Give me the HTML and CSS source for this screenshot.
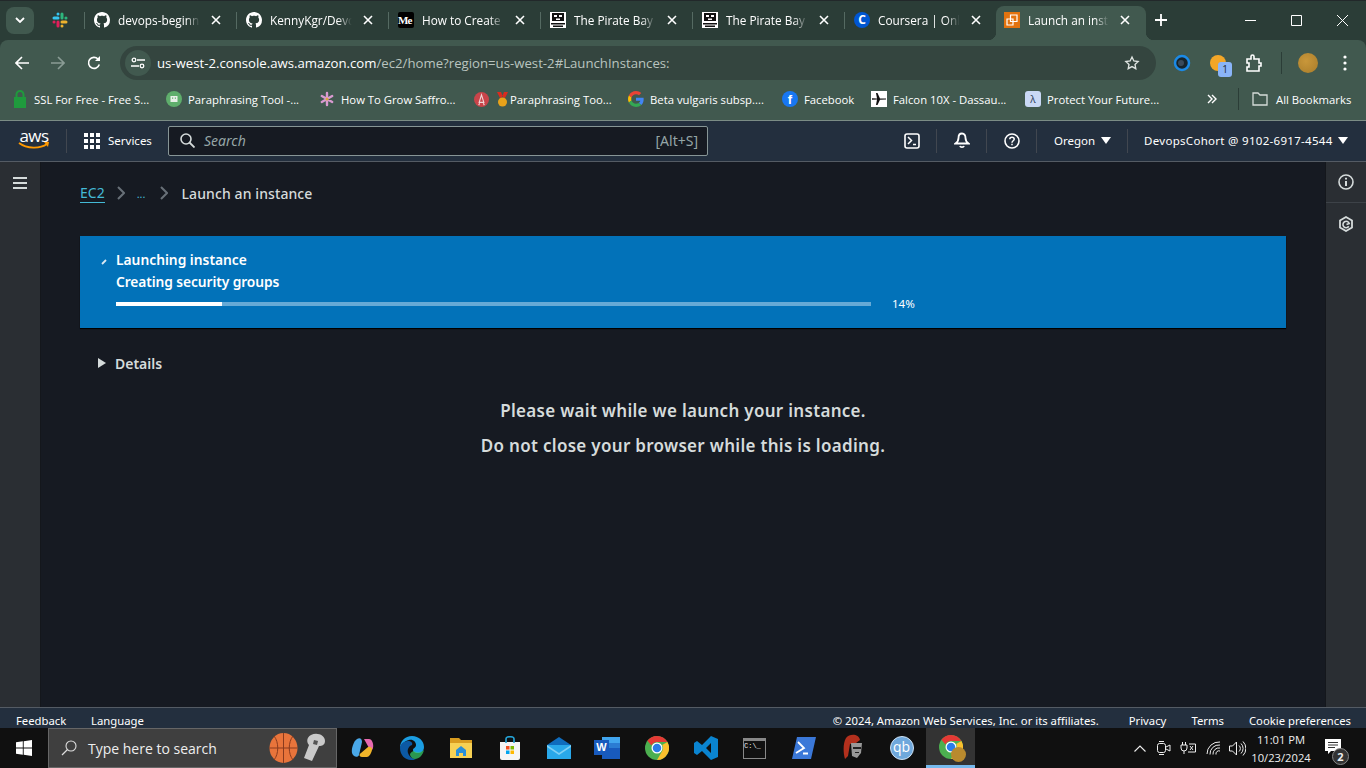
FILE: index.html
```html
<!DOCTYPE html>
<html lang="en">
<head>
    <meta charset="UTF-8">
    <meta name="viewport" content="width=device-width, initial-scale=1.0">
    <title>Launch an instance</title>
    <link rel="stylesheet" href="styles.css">
</head>
<body>
    <svg class="defs" width="0" height="0">
        <symbol id="github" viewBox="0 0 16 16"><path fill="#fff" d="M8 0C3.58 0 0 3.58 0 8c0 3.54 2.29 6.53 5.47 7.59.4.07.55-.27.55-.38 0-.19-.01-.82-.01-1.49-2.01.37-2.53-.49-2.69-.94-.09-.23-.48-.94-.82-1.13-.28-.15-.68-.52-.01-.53.63-.01 1.08.58 1.23.82.72 1.21 1.87.87 2.33.66.07-.52.28-.87.51-1.07-1.78-.2-3.64-.89-3.64-3.95 0-.87.31-1.59.82-2.15-.08-.2-.36-1.02.08-2.12 0 0 .67-.21 2.2.82.64-.18 1.32-.27 2-.27s1.36.09 2 .27c1.53-1.04 2.2-.82 2.2-.82.44 1.1.16 1.92.08 2.12.51.56.82 1.27.82 2.15 0 3.07-1.87 3.75-3.65 3.95.29.25.54.73.54 1.48 0 1.07-.01 1.93-.01 2.2 0 .21.15.46.55.38A8.013 8.013 0 0016 8c0-4.42-3.58-8-8-8z"/></symbol>
        <symbol id="pirate" viewBox="0 0 16 16"><path fill="#fff" d="M0 0h16v16H0z"/><path fill="#111" d="M2 1h12v8H2zM1 11h14v1.500H1zM3 13.500h10V15H3z"/><path fill="#fff" d="M4 3h3v2H4zM9 3h3v2H9zM6 6.500h4V8H6z"/></symbol>
        <symbol id="close" viewBox="0 0 10 10"><path stroke="#fff" stroke-width="1.600" d="M1 1l8 8M9 1l-8 8"/></symbol>
        <symbol id="chrome-mark" viewBox="0 0 48 48">
            <circle cx="24" cy="24" r="24" fill="#4caf50"/>
            <path fill="#e53935" d="M24 0a24 24 0 0 1 20.800 12H24a12 12 0 0 0-11 7.200L4.800 9.600A24 24 0 0 1 24 0z"/>
            <path fill="#fbc02d" d="M44.800 12A24 24 0 0 1 24 48l10.400-18A12 12 0 0 0 34.400 18z"/>
            <circle cx="24" cy="24" r="11" fill="#fff"/>
            <circle cx="24" cy="24" r="8.500" fill="#2b7de9"/>
        </symbol>
    </svg>

    <div class="tabstrip">
        <div class="tab-list-btn"><svg width="10" height="6" viewBox="0 0 10 6"><path fill="none" stroke="#fff" stroke-width="1.800" d="M1 1l4 4 4-4"/></svg></div>
        <div class="pinned">
            <svg width="16" height="16" viewBox="0 0 16 16">
                <path stroke="#36c5f0" stroke-width="3" stroke-linecap="round" d="M2 6h4M6 2v.1"/>
                <path stroke="#2eb67d" stroke-width="3" stroke-linecap="round" d="M10 2v4M14 6h-.1"/>
                <path stroke="#ecb22e" stroke-width="3" stroke-linecap="round" d="M10 10h4M10 14v-.1"/>
                <path stroke="#e01e5a" stroke-width="3" stroke-linecap="round" d="M6 14v-4M2 10h.1"/>
            </svg>
        </div>
        <div class="tab">
            <svg class="favicon" width="16" height="16"><use href="#github"/></svg>
            <span class="tab-title">devops-beginn</span>
            <svg class="tab-close" width="10" height="10"><use href="#close"/></svg>
        </div>
        <div class="tab">
            <svg class="favicon" width="16" height="16"><use href="#github"/></svg>
            <span class="tab-title">KennyKgr/Devo</span>
            <svg class="tab-close" width="10" height="10"><use href="#close"/></svg>
        </div>
        <div class="tab">
            <span class="favicon medium">Me</span>
            <span class="tab-title">How to Create</span>
            <svg class="tab-close" width="10" height="10"><use href="#close"/></svg>
        </div>
        <div class="tab">
            <svg class="favicon" width="16" height="16"><use href="#pirate"/></svg>
            <span class="tab-title">The Pirate Bay</span>
            <svg class="tab-close" width="10" height="10"><use href="#close"/></svg>
        </div>
        <div class="tab">
            <svg class="favicon" width="16" height="16"><use href="#pirate"/></svg>
            <span class="tab-title">The Pirate Bay</span>
            <svg class="tab-close" width="10" height="10"><use href="#close"/></svg>
        </div>
        <div class="tab">
            <span class="favicon coursera">C</span>
            <span class="tab-title">Coursera | Onli</span>
            <svg class="tab-close" width="10" height="10"><use href="#close"/></svg>
        </div>
        <div class="tab tab-active">
            <svg class="favicon" width="16" height="16" viewBox="0 0 16 16">
                <path fill="#e2730f" d="M0 0h16v16H0z"/>
                <path fill="none" stroke="#fff" stroke-width="1.200" d="M6.500 3h6.500v6.500H6.500zM3 7h6v6H3z"/>
            </svg>
            <span class="tab-title">Launch an insta</span>
            <svg class="tab-close" width="10" height="10"><use href="#close"/></svg>
        </div>
        <svg class="new-tab" width="12" height="12" viewBox="0 0 12 12"><path stroke="#fff" stroke-width="1.800" d="M6 0v12M0 6h12"/></svg>
        <div class="window-btns">
            <svg width="11" height="11" viewBox="0 0 11 11"><path stroke="#fff" d="M0 5.500h11"/></svg>
            <svg width="11" height="11" viewBox="0 0 11 11"><path fill="none" stroke="#fff" d="M.5.500h10v10H.5z"/></svg>
            <svg width="11" height="11" viewBox="0 0 11 11"><path stroke="#fff" d="M0 0l11 11M11 0L0 11"/></svg>
        </div>
    </div>

    <div class="toolbar">
        <svg class="tool-icon" width="14" height="14" viewBox="0 0 14 14"><path fill="none" stroke="#fff" stroke-width="1.600" d="M14 7H1.500M7 1L1 7l6 6"/></svg>
        <svg class="tool-icon" width="14" height="14" viewBox="0 0 14 14"><path fill="none" stroke="#8a9c95" stroke-width="1.600" d="M0 7h12.500M7 1l6 6-6 6"/></svg>
        <svg class="tool-icon" width="14" height="14" viewBox="0 0 14 14"><path fill="none" stroke="#fff" stroke-width="1.600" d="M12.300 8.500A5.500 5.500 0 1 1 11 3"/><path fill="#fff" d="M13 0v5H8z"/></svg>
        <div class="omnibox">
            <div class="site-info">
                <svg width="14" height="12" viewBox="0 0 14 12"><g fill="none" stroke="#fff" stroke-width="1.300"><circle cx="3" cy="3" r="1.800"/><path d="M6 3h8M0 9h8"/><circle cx="11" cy="9" r="1.800"/></g></svg>
            </div>
            <span class="url"><b>us-west-2.console.aws.amazon.com</b>/ec2/home?region=us-west-2#LaunchInstances:</span>
            <svg width="16" height="16" viewBox="0 0 24 24"><path fill="none" stroke="#dfe5e2" stroke-width="2" d="M12 3l2.800 5.900 6.400.8-4.700 4.400 1.200 6.400-5.700-3.100-5.700 3.100 1.200-6.400L2.800 9.700l6.400-.8z"/></svg>
        </div>
        <div class="extensions">
            <svg width="18" height="18" viewBox="0 0 18 18"><circle cx="9" cy="9" r="7" fill="#16242c" stroke="#1b8ae6" stroke-width="2.500"/><circle cx="8" cy="9" r="3" fill="#3a4a5a"/></svg>
            <div class="ext-orange"><span class="ext-badge">1</span></div>
            <svg width="16" height="18" viewBox="0 0 16 18"><path fill="none" stroke="#fff" stroke-width="1.600" d="M1 5h4V2.500a1.500 1.500 0 0 1 3 0V5h5v4h2v3h-2v5H1v-4h2v-4H1z"/></svg>
            <span class="ext-sep"></span>
            <div class="avatar"></div>
            <svg width="4" height="16" viewBox="0 0 4 16"><g fill="#fff"><circle cx="2" cy="2" r="1.600"/><circle cx="2" cy="8" r="1.600"/><circle cx="2" cy="14" r="1.600"/></g></svg>
        </div>
    </div>

    <div class="bookmarks">
        <div class="bookmark bm-ssl">
            <svg width="14" height="18" viewBox="0 0 14 18"><path fill="#1f9a3d" d="M1 7h12v11H1z"/><path fill="none" stroke="#1f9a3d" stroke-width="2" d="M3.500 7V4.500a3.500 3.500 0 0 1 7 0V7"/></svg>
            <span>SSL For Free - Free S...</span>
        </div>
        <div class="bookmark bm-para">
            <svg width="16" height="16" viewBox="0 0 16 16"><circle cx="8" cy="8" r="8" fill="#5fae6c"/><path fill="#e8efe8" d="M4.500 5h7v6h-7z"/><path fill="#5fae6c" d="M6 6.500h1.200v1.200H6zM8.800 6.500H10v1.200H8.800z"/></svg>
            <span>Paraphrasing Tool -...</span>
        </div>
        <div class="bookmark bm-saffron">
            <svg width="16" height="16" viewBox="0 0 16 16"><g stroke="#d99ad0" stroke-width="2.400" stroke-linecap="round"><path d="M8 2v12M2.800 5l10.400 6M13.200 5L2.800 11"/></g><circle cx="8" cy="8" r="1.500" fill="#d9a53a"/></svg>
            <span>How To Grow Saffro...</span>
        </div>
        <div class="bookmark bm-medal">
            <svg width="15" height="15" viewBox="0 0 16 16"><circle cx="8" cy="8" r="8" fill="#c9444a"/><path fill="none" stroke="#f0d6d6" stroke-width="1.200" d="M8 3l2.500 8h-5zM6 12l-1 2M10 12l1 2"/></svg>
            <svg class="medal" width="13" height="15" viewBox="0 0 13 15"><path fill="#d92b1f" d="M1 0h4l2 5-3 1zM12 0H8L6 5l3 1z"/><circle cx="6.500" cy="10" r="4.500" fill="#e8a21a"/></svg>
            <span>Paraphrasing Too...</span>
        </div>
        <div class="bookmark bm-google">
            <svg width="16" height="16" viewBox="0 0 48 48"><path fill="#EA4335" d="M24 9.500c3.500 0 6.700 1.300 9.100 3.500l6.800-6.800C35.800 2.400 30.200 0 24 0 14.600 0 6.500 5.400 2.600 13.200l7.900 6.100C12.400 13.700 17.700 9.500 24 9.500z"/><path fill="#4285F4" d="M47 24.500c0-1.600-.2-3.100-.4-4.500H24v9h13c-.6 3-2.300 5.500-4.800 7.200l7.700 6C44.400 38 47 31.800 47 24.500z"/><path fill="#FBBC05" d="M10.500 28.700c-.5-1.400-.8-3-.8-4.700s.3-3.200.8-4.700l-7.900-6.100C.9 16.500 0 20.100 0 24s.9 7.500 2.600 10.800z"/><path fill="#34A853" d="M24 48c6.500 0 11.900-2.100 15.900-5.800l-7.700-6c-2.200 1.500-4.900 2.300-8.200 2.300-6.300 0-11.600-4.200-13.500-9.900l-7.900 6.100C6.500 42.600 14.600 48 24 48z"/></svg>
            <span>Beta vulgaris subsp....</span>
        </div>
        <div class="bookmark bm-facebook">
            <span class="fb-icon">f</span>
            <span>Facebook</span>
        </div>
        <div class="bookmark bm-falcon">
            <svg width="16" height="16" viewBox="0 0 16 16"><path fill="#fff" d="M0 0h16v16H0z"/><path fill="#111" d="M1 7.200l5 .2L5 2h1.500L9 7.400l6 .2v1L9 8.800 6.500 14H5l1-5.400-5 .2z"/></svg>
            <span>Falcon 10X - Dassau...</span>
        </div>
        <div class="bookmark bm-protect">
            <span class="protect-icon">λ</span>
            <span>Protect Your Future...</span>
        </div>
        <svg class="bm-more" width="10" height="10" viewBox="0 0 10 10"><path fill="none" stroke="#fff" stroke-width="1.400" d="M1 1l4 4-4 4M5 1l4 4-4 4"/></svg>
        <span class="bm-sep"></span>
        <div class="bookmark bm-all">
            <svg width="16" height="14" viewBox="0 0 16 14"><path fill="none" stroke="#d5dcd9" stroke-width="1.300" d="M1 1h5l2 2h7v10H1z"/></svg>
            <span>All Bookmarks</span>
        </div>
    </div>

    <header class="aws-nav">
        <div class="aws-logo">
            <span class="aws-word">aws</span>
            <svg width="32" height="8" viewBox="0 0 32 8"><path fill="none" stroke="#f90" stroke-width="1.800" d="M1 1c8 6 21 6 28 1"/><path fill="#f90" d="M26 0l5 0-1 5z"/></svg>
        </div>
        <span class="nav-sep-logo"></span>
        <svg class="grid-icon" width="16" height="16" viewBox="0 0 16 16"><g fill="#fff"><path d="M0 0h4v4H0zM6 0h4v4H6zM12 0h4v4h-4zM0 6h4v4H0zM6 6h4v4H6zM12 6h4v4h-4zM0 12h4v4H0zM6 12h4v4H6zM12 12h4v4h-4z"/></g></svg>
        <span class="nav-services">Services</span>
        <div class="nav-search">
            <svg width="15" height="15" viewBox="0 0 15 15"><circle cx="6" cy="6" r="5" fill="none" stroke="#d5dbdb" stroke-width="1.600"/><path stroke="#d5dbdb" stroke-width="1.800" d="M9.500 9.500l5 5"/></svg>
            <span class="search-word">Search</span>
            <span class="search-key">[Alt+S]</span>
        </div>
        <div class="nav-right">
            <div class="nav-btn nav-icon-btn">
                <svg width="16" height="16" viewBox="0 0 16 16"><rect x="1" y="1" width="14" height="14" rx="2" fill="none" stroke="#fff" stroke-width="1.600"/><path fill="none" stroke="#fff" stroke-width="1.500" d="M4 4l3.500 3.500L4 11M9 11.500h3"/></svg>
            </div>
            <div class="nav-btn nav-icon-btn">
                <svg width="16" height="17" viewBox="0 0 16 17"><path fill="none" stroke="#fff" stroke-width="1.800" d="M8 1.500c-2.500 0-3.500 2-3.500 4.500 0 2.500-1 4-3 5.500h13c-2-1.500-3-3-3-5.500 0-2.500-1-4.500-3.500-4.500zM6 14c.5 1.500 3.500 1.500 4 0"/></svg>
            </div>
            <div class="nav-btn nav-icon-btn">
                <svg width="16" height="16" viewBox="0 0 16 16"><circle cx="8" cy="8" r="7" fill="none" stroke="#fff" stroke-width="1.600"/><path fill="none" stroke="#fff" stroke-width="1.500" d="M5.800 6.200C5.800 3.700 10.200 3.700 10.200 6.200 10.200 7.800 8 7.800 8 9.700"/><path stroke="#fff" stroke-width="1.500" d="M8 10.800v1.500"/></svg>
            </div>
            <div class="nav-btn nav-region"><span>Oregon</span><i class="caret"></i></div>
            <div class="nav-btn nav-account"><span>DevopsCohort @ 9102-6917-4544</span><i class="caret"></i></div>
        </div>
    </header>

    <div class="console">
        <aside class="side-left">
            <svg width="14" height="12" viewBox="0 0 14 12"><path stroke="#d5dbdb" stroke-width="2" d="M0 1h14M0 6h14M0 11h14"/></svg>
        </aside>

        <main class="content">
            <nav class="crumbs">
                <a class="crumb-link">EC2</a>
                <svg class="crumb-arrow" width="8" height="14" viewBox="0 0 8 14"><path fill="none" stroke="#687078" stroke-width="2" d="M1 1l6 6-6 6"/></svg>
                <span class="crumb-dots">...</span>
                <svg class="crumb-arrow" width="8" height="14" viewBox="0 0 8 14"><path fill="none" stroke="#687078" stroke-width="2" d="M1 1l6 6-6 6"/></svg>
                <span class="crumb-current">Launch an instance</span>
            </nav>

            <section class="flash">
                <svg class="flash-spin" width="6" height="6" viewBox="0 0 6 6"><path stroke="#dbe9f3" stroke-width="1.800" d="M1 5l4-4"/></svg>
                <div class="flash-body">
                    <div class="flash-title">Launching instance</div>
                    <div class="flash-step">Creating security groups</div>
                    <div class="progress-row">
                        <div class="progress-track"><div class="progress-fill" style="width: 14%"></div></div>
                        <span class="progress-pct">14%</span>
                    </div>
                </div>
            </section>

            <div class="details">
                <i class="details-arrow"></i>
                <span>Details</span>
            </div>

            <div class="wait-msg">
                <p>Please wait while we launch your instance.</p>
                <p>Do not close your browser while this is loading.</p>
            </div>
        </main>

        <aside class="side-right">
            <div class="side-btn">
                <svg width="16" height="16" viewBox="0 0 16 16"><circle cx="8" cy="8" r="7" fill="none" stroke="#d5dbdb" stroke-width="1.600"/><path stroke="#d5dbdb" stroke-width="2" d="M8 7v5M8 3.700v1.800"/></svg>
            </div>
            <div class="side-btn">
                <svg width="14" height="16" viewBox="0 0 14 16"><path fill="none" stroke="#d5dbdb" stroke-width="1.800" d="M7 1l6 3.500v7L7 15l-6-3.500v-7z"/><path fill="none" stroke="#d5dbdb" stroke-width="1.600" d="M9.800 10.300A3.200 3.200 0 1 1 10.200 7.500L7.500 8.500"/></svg>
            </div>
        </aside>
    </div>

    <footer class="aws-footer">
        <span class="foot-feedback">Feedback</span>
        <span class="foot-language">Language</span>
        <span class="foot-copy">© 2024, Amazon Web Services, Inc. or its affiliates.</span>
        <span class="foot-privacy">Privacy</span>
        <span class="foot-terms">Terms</span>
        <span>Cookie preferences</span>
    </footer>

    <div class="taskbar">
        <div class="start">
            <svg width="16" height="16" viewBox="0 0 16 16"><path fill="#fff" d="M0 2.300l6.800-1v6.200H0zM7.700 1.200L16 0v7.500H7.700zM0 8.500h6.800v6.200l-6.800-1zM7.700 8.500H16V16l-8.300-1.200z"/></svg>
        </div>
        <div class="win-search">
            <svg width="16" height="16" viewBox="0 0 16 16"><circle cx="10" cy="6" r="5" fill="none" stroke="#ddd" stroke-width="1.100"/><path stroke="#ddd" stroke-width="1.300" d="M6.500 9.500L1 15"/></svg>
            <span class="win-search-text">Type here to search</span>
            <svg class="ball" width="29" height="30" viewBox="0 0 29 30"><ellipse cx="14.500" cy="15" rx="14" ry="15" fill="#e8743b"/><path fill="none" stroke="#8a3b1e" stroke-width="1" d="M14.500 0v30M.5 15h28M5 3c5 6 5 18 0 24M24 3c-5 6-5 18 0 24"/></svg>
            <svg width="26" height="30" viewBox="0 0 26 30"><path fill="#c9c9c9" d="M10 2c6-3 14 0 14 6 0 4-3 5-6 5l-7 15-8-3 5-13C5 9 6 4 10 2z"/><path fill="#555" d="M13 7l4 1-1 4-4-1z"/></svg>
        </div>
        <div class="task-apps">
            <div class="task-app">
                <svg width="24" height="24" viewBox="0 0 24 24"><path fill="#4aa8e8" d="M6 3c3-2 5 0 5 3l-3 13c-1 3-6 2-7-2-1-5 2-12 5-14z"/><path fill="#e86ab0" d="M13 3h5c3 0 5 5 4 9-.5 3-3 2-4 0z"/><path fill="#f0b429" d="M16 21h-5c-3 0-3-3-1-4l7-6c2-1 5 1 4 3-1 4-3 7-5 7z"/></svg>
            </div>
            <div class="task-app">
                <svg width="24" height="24" viewBox="0 0 24 24"><path fill="#1b9de2" d="M12 0c7 0 12 5 12 11 0 4-3 6-6 6-4 0-5-2-5-3 0-2 3-2 3-5 0-3-3-6-7-5C4 5 1 9 0 12 0 5 5 0 12 0z"/><path fill="#0c59a4" d="M0 12c0-4 4-7 8-7 3 0 5 2 4 4-3 1-5 4-4 8 1 3 4 6 8 6-2 1-3 1-5 1C5 24 0 19 0 12z"/><path fill="#38d16c" d="M14 15c2 2 7 2 10-1-1 5-5 9-9 9-3 0-5-3-5-5 1-2 3-3 4-3z" opacity=".7"/></svg>
            </div>
            <div class="task-app">
                <svg width="22" height="20" viewBox="0 0 22 20"><path fill="#d99c1f" d="M0 0h9l2 2h11v18H0z"/><path fill="#f7d154" d="M0 5h22v15H0z"/><path fill="#2a8fd8" d="M6 12l5-4 5 4v6h-3v-3H9v3H6z"/></svg>
            </div>
            <div class="task-app">
                <svg width="22" height="24" viewBox="0 0 22 24"><path fill="#f5f5f5" d="M1 6h20v16a2 2 0 0 1-2 2H3a2 2 0 0 1-2-2z"/><path fill="none" stroke="#25a5d8" stroke-width="1.600" d="M7 7V3c0-3 8-3 8 0v4"/><path fill="#f25022" d="M7 10h3.500v3.500H7z"/><path fill="#7fba00" d="M11.500 10H15v3.500h-3.500z"/><path fill="#00a4ef" d="M7 14.500h3.500V18H7z"/><path fill="#ffb900" d="M11.500 14.500H15V18h-3.500z"/></svg>
            </div>
            <div class="task-app">
                <svg width="24" height="22" viewBox="0 0 24 22"><path fill="#0f6cbd" d="M12 0l12 8H0z"/><path fill="#29a8ea" d="M0 8h24v14H0z"/><path fill="#7fd0f5" d="M0 8l12 8 12-8v2l-12 8L0 10z"/></svg>
            </div>
            <div class="task-app">
                <svg width="24" height="22" viewBox="0 0 24 22"><path fill="#2b7cd3" d="M6 0h18v22H6z"/><path fill="#185abd" d="M6 11h18v11H6z"/><path fill="#41a5ee" d="M6 0h18v6H6z"/></svg>
                <span class="word-w">W</span>
            </div>
            <div class="task-app">
                <svg width="24" height="24" viewBox="0 0 48 48"><use href="#chrome-mark"/></svg>
            </div>
            <div class="task-app">
                <svg width="24" height="24" viewBox="0 0 24 24"><path fill="#0a84d0" d="M17 0l7 3v18l-7 3-9-9-5 4-3-2v-10l3-2 5 4zM17 7l-5 5 5 5z" fill-rule="evenodd"/></svg>
            </div>
            <div class="task-app">
                <div class="cmd-icon"><span>C:\_</span></div>
            </div>
            <div class="task-app">
                <svg width="24" height="22" viewBox="0 0 24 22"><path fill="#3b78d8" d="M5 0h19l-5 22H0z"/><path fill="none" stroke="#fff" stroke-width="1.800" d="M6 5l6 6-8 5M11 16.500h5"/></svg>
            </div>
            <div class="task-app">
                <svg width="24" height="28" viewBox="0 0 24 28"><path fill="#b3301d" d="M5 4c4-5 13-4 14 2l-4 3-6 1-2 12-3 3C2 18 2 9 5 4z"/><path fill="#999" d="M10 9h11l-1 10-4 5-5-2z"/><path fill="#222" d="M12 13h8v2h-8zM14 18h4v1h-4z"/></svg>
            </div>
            <div class="task-app">
                <span class="qb-icon">qb</span>
            </div>
            <div class="task-app task-active">
                <svg width="24" height="24" viewBox="0 0 48 48"><use href="#chrome-mark"/></svg>
                <span class="cookie-dot"></span>
            </div>
        </div>
        <div class="tray">
            <svg class="tray-caret" width="12" height="7" viewBox="0 0 12 7"><path fill="none" stroke="#eee" stroke-width="1.100" d="M.5 6.500L6 1l5.500 5.500"/></svg>
            <svg class="tray-meet" width="14" height="16" viewBox="0 0 14 16"><rect x=".5" y="3.500" width="8" height="9" rx="2" fill="none" stroke="#eee"/><path fill="none" stroke="#eee" d="M9 7l4-2v6l-4-2M2 1.500h5M2 14.500h5"/></svg>
            <svg class="tray-power" width="16" height="14" viewBox="0 0 16 14"><path fill="none" stroke="#eee" d="M1 4h6v3a3 3 0 0 1-6 0zM2.500 1v3M5.500 1v3M4 10v3M9 3h6.500v8H8"/><path stroke="#eee" d="M10 5l3 4M13 5l-3 4"/></svg>
            <svg class="tray-wifi" width="15" height="14" viewBox="0 0 15 14"><path fill="none" stroke="#eee" d="M1 13A12 12 0 0 1 14 1M4 13.500A9 9 0 0 1 14 4M7 13.500A6 6 0 0 1 14 7M10 13.500A3 3 0 0 1 14 10"/></svg>
            <svg class="tray-vol" width="17" height="15" viewBox="0 0 17 15"><path fill="none" stroke="#eee" d="M.5 5h3l4-4v13l-4-4h-3zM10 4.500a4 4 0 0 1 0 6M12 2.500a7 7 0 0 1 0 10M14 .5a10 10 0 0 1 0 14"/></svg>
            <div class="clock"><span>11:01 PM</span><span>10/23/2024</span></div>
            <div class="notify">
                <svg width="16" height="15" viewBox="0 0 16 15"><path fill="#fff" d="M0 0h16v12H6l-3 3v-3H0z"/><path stroke="#333" d="M3 3.500h10M3 6h10M3 8.500h7"/></svg>
                <span class="notify-count">2</span>
            </div>
        </div>
    </div>
</body>
</html>
```

FILE: styles.css
```css
* {
    box-sizing: border-box;
}
html, body {
    margin: 0;
    height: 100%;
}
body {
    width: 1366px;
    height: 768px;
    overflow: hidden;
    display: flex;
    flex-direction: column;
    font-family: "Open Sans", "Noto Sans", sans-serif;
    font-size: 12px;
    color: #fff;
    background: #2b3d37;
}
.defs {
    position: absolute;
}

/* browser tabs */
.tabstrip {
    flex: 0 0 40px;
    display: flex;
    align-items: center;
    padding: 0 0 1px 6px;
    background: #2b3d37;
    border-top: 1px solid #22282a;
}
.tab-list-btn {
    width: 28px;
    height: 27px;
    border-radius: 8px;
    background: #41594f;
    display: flex;
    align-items: center;
    justify-content: center;
}
.pinned {
    width: 50px;
    padding-left: 18px;
    height: 24px;
    display: flex;
    align-items: center;
}
.tab {
    width: 152px;
    height: 17px;
    display: flex;
    align-items: center;
    padding: 0 15px 0 9px;
    border-left: 1px solid #556a62;
}
.tab-title {
    flex: 1;
    margin-left: 8px;
    white-space: nowrap;
    overflow: hidden;
    font-size: 11.800px;
    -webkit-mask-image: linear-gradient(to right, #000 78%, transparent 94%);
    mask-image: linear-gradient(to right, #000 78%, transparent 94%);
}
.favicon {
    flex: 0 0 16px;
    width: 16px;
    height: 16px;
}
.medium {
    background: #000;
    border-radius: 2px;
    font: bold 11px/16px "Liberation Serif", serif;
    letter-spacing: -1px;
    white-space: nowrap;
}
.coursera {
    background: #0056d2;
    border-radius: 50%;
    font: bold 12px/16px "Open Sans", sans-serif;
    text-align: center;
}
.tab-close {
    flex: 0 0 10px;
    margin-left: 6px;
}
.tab-active {
    position: relative;
    align-self: flex-end;
    height: 34px;
    width: 150px;
    margin-bottom: -1px;
    padding: 0 16px 6px 8px;
    border-left: 0;
    border-radius: 8px 8px 0 0;
    background: #41594f;
}
.tab-active::before,
.tab-active::after {
    content: "";
    position: absolute;
    bottom: 0;
    width: 8px;
    height: 8px;
}
.tab-active::before {
    left: -8px;
    background: radial-gradient(circle at 0 0, transparent 8px, #41594f 8.500px);
}
.tab-active::after {
    right: -8px;
    background: radial-gradient(circle at 100% 0, transparent 8px, #41594f 8.500px);
}
.new-tab {
    margin-left: 9px;
}
.window-btns {
    margin-left: auto;
    display: flex;
    gap: 35px;
    padding-right: 18px;
}

/* browser toolbar */
.toolbar {
    flex: 0 0 43px;
    display: flex;
    align-items: center;
    padding: 3px 0 0 15px;
    background: #41594f;
    border-radius: 8px 8px 0 0;
}
.tool-icon {
    margin-right: 22px;
}
.tool-icon:nth-child(3) {
    margin-right: 19px;
}
.omnibox {
    width: 1036px;
    height: 34px;
    border-radius: 17px;
    background: #34453f;
    display: flex;
    align-items: center;
    padding: 0 16px 0 5px;
}
.site-info {
    width: 26px;
    height: 26px;
    border-radius: 50%;
    background: #41594f;
    display: flex;
    align-items: center;
    justify-content: center;
}
.url {
    flex: 1;
    margin-left: 6px;
    font-size: 13.200px;
    color: #b9c4bf;
}
.url b {
    font-weight: 400;
    color: #fff;
}
.extensions {
    flex: 1;
    display: flex;
    align-items: center;
    padding-left: 17px;
}
.ext-orange {
    position: relative;
    width: 16px;
    height: 16px;
    margin-left: 19px;
    border-radius: 50%;
    background: #f2a628;
}
.ext-badge {
    position: absolute;
    left: 8px;
    top: 7px;
    width: 14px;
    height: 15px;
    border-radius: 3px;
    background: #8ab4f8;
    color: #1d2b33;
    font-size: 10px;
    line-height: 15px;
    text-align: center;
}
.extensions svg:nth-child(3) {
    margin-left: 20px;
}
.ext-sep {
    width: 1px;
    height: 22px;
    margin: 0 16px 0 19px;
    background: #2b3d37;
}
.avatar {
    width: 20px;
    height: 20px;
    border-radius: 50%;
    background: radial-gradient(circle at 40% 40%, #c9973a, #a87c2a);
}
.avatar + svg {
    margin-left: 25px;
}

/* bookmarks bar */
.bookmarks {
    flex: 0 0 38px;
    display: flex;
    align-items: center;
    padding: 0 0 5px 11px;
    background: #41594f;
    border-bottom: 1px solid #7b8c85;
    font-size: 11.300px;
}
.bookmark {
    display: flex;
    align-items: center;
    gap: 6px;
    white-space: nowrap;
}
.bm-ssl { width: 155px; padding-left: 2px; gap: 7px; }
.bm-para { width: 153px; }
.bm-saffron { width: 155px; }
.bm-medal { width: 154px; gap: 0; }
.bm-google { width: 154px; }
.bm-facebook { width: 89px; }
.bm-falcon { width: 154px; }
.bm-protect { width: 182px; }
.bm-medal .medal {
    margin: 0 1px 0 7px;
}
.bm-all {
    gap: 8px;
}
.fb-icon {
    width: 16px;
    height: 16px;
    border-radius: 50%;
    background: #1877f2;
    font: bold 13px/18px "Liberation Sans", sans-serif;
    text-align: center;
}
.protect-icon {
    width: 16px;
    height: 16px;
    border-radius: 3px;
    background: #c9d8f5;
    color: #2a3a55;
    font-size: 10px;
    line-height: 16px;
    text-align: center;
}
.bm-sep {
    width: 1px;
    height: 22px;
    margin: 0 13px 0 21px;
    background: #2b3d37;
}

/* aws console header */
.aws-nav {
    flex: 0 0 41px;
    display: flex;
    align-items: center;
    padding: 0 0 1px 18px;
    background: #232f3e;
    border-bottom: 1px solid #545b64;
    font-family: "Noto Sans", sans-serif;
    font-size: 11.500px;
}
.aws-logo {
    width: 32px;
    display: flex;
    flex-direction: column;
    align-items: center;
    margin-top: -2px;
}
.aws-word {
    font: 17px/13px "Open Sans", sans-serif;
    letter-spacing: -.5px;
}
.nav-sep-logo {
    width: 1px;
    height: 24px;
    margin: 0 17px 0 16px;
    background: #414750;
}
.nav-services {
    width: 44px;
    margin-left: 8px;
    white-space: nowrap;
}
.nav-search {
    width: 540px;
    height: 30px;
    margin-left: 16px;
    display: flex;
    align-items: center;
    padding: 0 9px 0 11px;
    background: #161a22;
    border: 1px solid #879596;
    border-radius: 2px;
    font-size: 14px;
}
.search-word {
    margin-left: 9px;
    flex: 1;
    font-style: italic;
    color: #95a5a6;
}
.search-key {
    color: #95a5a6;
    font-size: 14px;
}
.nav-right {
    flex: 1;
    display: flex;
    align-items: center;
    height: 100%;
    padding-left: 179px;
}
.nav-btn {
    height: 24px;
    display: flex;
    align-items: center;
    gap: 6px;
    white-space: nowrap;
    border-left: 1px solid #414750;
}
.nav-icon-btn {
    width: 50px;
    justify-content: center;
}
.nav-icon-btn:first-child {
    width: 49px;
    border-left: 0;
}
.nav-region {
    width: 91px;
    padding-left: 17px;
}
.nav-account {
    padding-left: 16px;
    gap: 5px;
    letter-spacing: .3px;
}
.caret {
    width: 0;
    height: 0;
    border-left: 5px solid transparent;
    border-right: 5px solid transparent;
    border-top: 7px solid #fff;
}

/* console body */
.console {
    flex: 1;
    min-height: 0;
    display: flex;
    font-family: "Noto Sans", sans-serif;
    background: #161a22;
}
.side-left {
    width: 41px;
    padding: 14px 0 0 13px;
    background: #2a2e33;
    border-right: 1px solid #14171c;
}
.side-right {
    width: 41px;
    background: #2a2e33;
    border-left: 1px solid #14171c;
}
.side-btn {
    height: 41px;
    display: flex;
    align-items: center;
    justify-content: center;
    border-bottom: 1px solid #3d4248;
}
.side-btn:last-child {
    border-bottom: 0;
}
.content {
    flex: 1;
    padding: 0 39px;
}
.crumbs {
    display: flex;
    align-items: center;
    height: 20px;
    margin-top: 21px;
    font-size: 14px;
}
.crumb-link {
    color: #44b9d6;
    border-bottom: 1px solid #44b9d6;
    line-height: 18px;
}
.crumb-arrow {
    margin: 0 12px;
}
.crumb-dots {
    color: #44b9d6;
    font-size: 11px;
    margin-right: 2px;
}
.crumb-current {
    font-weight: 500;
    color: #d5dbdb;
    margin-left: 2px;
    letter-spacing: .1px;
}
.flash {
    height: 92px;
    margin-top: 33px;
    display: flex;
    padding: 14px 0 0 21px;
    background: #0272b9;
    box-shadow: 0 1px 1px #000;
}
.flash-spin {
    margin: 9px 9px 0 0;
}
.flash-body {
    flex: 1;
    font-size: 13.800px;
    font-weight: 600;
    line-height: 20px;
}
.flash-step {
    margin-top: 2px;
    letter-spacing: -.1px;
}
.progress-row {
    display: flex;
    align-items: center;
    margin-top: 2px;
    font-weight: 400;
    font-size: 11.500px;
    letter-spacing: 0;
}
.progress-track {
    width: 755px;
    height: 4px;
    background: #66aad6;
}
.progress-fill {
    height: 100%;
    background: #fff;
}
.progress-pct {
    margin-left: 21px;
}
.details {
    display: flex;
    align-items: center;
    margin: 25px 0 0 18px;
    height: 20px;
    font-size: 14px;
    font-weight: 600;
    color: #d5dbdb;
}
.details-arrow {
    width: 0;
    height: 0;
    border-top: 5px solid transparent;
    border-bottom: 5px solid transparent;
    border-left: 8px solid #d5dbdb;
    margin-right: 9px;
}
.wait-msg {
    margin-top: 27px;
    text-align: center;
    font-size: 17px;
    letter-spacing: .3px;
    font-weight: 600;
    color: #d5dbdb;
}
.wait-msg p {
    margin: 0 0 13px;
    line-height: 22px;
}

/* aws footer, cut off by the taskbar */
.aws-footer {
    flex: 0 0 21px;
    display: flex;
    align-items: flex-start;
    padding: 5px 15px 0 16px;
    overflow: hidden;
    background: #232f3e;
    border-top: 1px solid #545b64;
    font-family: "Noto Sans", sans-serif;
    font-size: 11.300px;
    line-height: 16px;
}
.foot-feedback {
    width: 75px;
}
.foot-copy {
    margin-left: auto;
}
.foot-privacy {
    margin-left: 30px;
}
.foot-terms {
    margin: 0 25px 0 25px;
}

/* windows taskbar */
.taskbar {
    flex: 0 0 40px;
    display: flex;
    background: #101010;
    color: #eee;
}
.start {
    width: 48px;
    display: flex;
    align-items: center;
    justify-content: center;
}
.win-search {
    width: 289px;
    display: flex;
    align-items: center;
    padding: 0 9px 0 12px;
    background: #3f3f3f;
    border: 1px solid #666;
}
.win-search-text {
    flex: 1;
    margin-left: 11px;
    font-size: 14px;
}
.ball {
    margin-right: 3px;
}
.task-apps {
    display: flex;
    padding-left: 1px;
}
.task-app {
    position: relative;
    width: 49px;
    display: flex;
    align-items: center;
    justify-content: center;
}
.task-active {
    background: #333;
    border-bottom: 3px solid #76b9ed;
}
.word-w {
    position: absolute;
    left: 11px;
    top: 12px;
    width: 15px;
    height: 15px;
    background: #185abd;
    color: #fff;
    font: bold 11px/15px "Liberation Sans", sans-serif;
    text-align: center;
}
.cmd-icon {
    width: 23px;
    height: 21px;
    background: #111;
    border: 1px solid #888;
    border-top-width: 3px;
    font: 7px/10px "Liberation Mono", monospace;
}
.qb-icon {
    width: 24px;
    height: 24px;
    border-radius: 50%;
    background: #6fa8dc;
    border: 1px solid #cfe2f3;
    color: #fff;
    font-size: 14px;
    line-height: 20px;
    text-align: center;
}
.cookie-dot {
    position: absolute;
    left: 25px;
    top: 19px;
    width: 15px;
    height: 15px;
    border-radius: 50%;
    background: #b98a2e;
}
.tray {
    flex: 1;
    display: flex;
    align-items: center;
    padding-left: 159px;
}
.tray-meet { margin-left: 11px; }
.tray-power { margin-left: 9px; }
.tray-wifi { margin-left: 10px; }
.tray-vol { margin-left: 8px; }
.clock {
    flex: 0 0 72px;
    margin-left: -1px;
    display: flex;
    flex-direction: column;
    align-items: center;
    gap: 3px;
    font-size: 11.200px;
    line-height: 15px;
}
.notify {
    position: relative;
    margin-left: 8px;
}
.notify-count {
    position: absolute;
    left: 7px;
    top: 9px;
    width: 17px;
    height: 17px;
    border-radius: 50%;
    background: #333;
    border: 1px solid #888;
    font-size: 11px;
    font-weight: 700;
    line-height: 15px;
    text-align: center;
}
```
